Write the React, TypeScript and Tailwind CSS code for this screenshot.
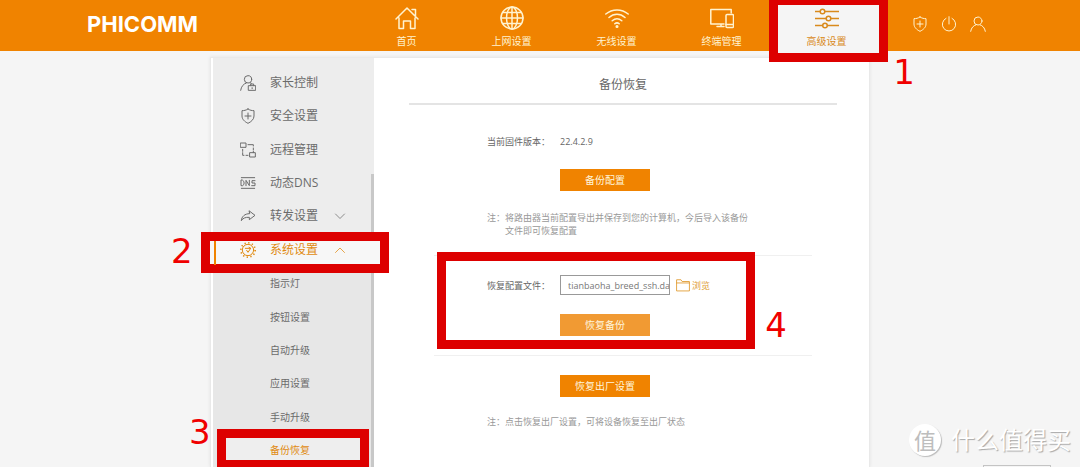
import type { ReactNode } from 'react';

type IconProps = { children: ReactNode; className?: string; box?: string };

function Icon({ children, className = 'size-4', box = '0 0 24 24' }: IconProps) {
  return (
    <svg
      viewBox={box}
      className={`shrink-0 ${className}`}
      fill="none"
      stroke="currentColor"
      strokeWidth="1.5"
      strokeLinecap="round"
      strokeLinejoin="round"
      aria-hidden="true"
    >
      {children}
    </svg>
  );
}

const shield = <path d="M12 1.500c3 2 6 2.500 9 2.500v8c0 5-4 8.500-9 11-5-2.500-9-6-9-11V4c3 0 6-.5 9-2.500ZM12 7.500v9M7.500 12h9" />;

const navItems = [
  {
    label: '首页',
    icon: <path d="M1 13 12 2l11 11M17 3.500h3.500V9.500M4 12v10.500h4.500v-7.500h7v7.500H20V12" />,
  },
  {
    label: '上网设置',
    icon: (
      <>
        <circle cx="12" cy="12" r="11" />
        <ellipse cx="12" cy="12" rx="5.500" ry="11" />
        <path d="M12 1v22M1 12h22M3 6.500h18M3 17.500h18" />
      </>
    ),
  },
  {
    label: '无线设置',
    icon: (
      <>
        <path d="M.8 8c6.500-5.500 15.900-5.500 22.400 0M4 11.500c4.800-4.300 11.200-4.300 16 0M7.200 14.800c3-2.600 6.600-2.600 9.600 0M9.800 17.800c1.400-1.200 3-1.200 4.400 0" />
        <circle cx="12" cy="20.500" r=".8" fill="currentColor" />
      </>
    ),
  },
  {
    label: '终端管理',
    icon: (
      <>
        <path d="M14 18H.8V3.500h20.400V7M11 18v2.500M7 20.500h7" />
        <rect x="16" y="8.500" width="7.500" height="13" rx="1" />
        <path d="M16 18.500h7.500" />
      </>
    ),
  },
  {
    label: '高级设置',
    icon: (
      <>
        <path d="M0 5.500h5M10 5.500h14M0 12.500h11M16 12.500h8M0 19.500h7.500M12.500 19.500H24" />
        <circle cx="7.500" cy="5.500" r="2.300" />
        <circle cx="13.500" cy="12.500" r="2.300" />
        <circle cx="10" cy="19.500" r="2.300" />
      </>
    ),
  },
];

const menuItems = [
  {
    label: '家长控制',
    icon: (
      <>
        <circle cx="12" cy="6.500" r="5.500" />
        <path d="M1 23c1-6 4-9.500 8.500-11M15 11.500l2 1" />
        <rect x="13" y="16" width="10.500" height="7" />
        <path d="M16 16v-2.500h4.500V16M18.200 19v1.500" />
      </>
    ),
  },
  { label: '安全设置', icon: shield },
  {
    label: '远程管理',
    icon: (
      <>
        <rect x="1" y="1.500" width="8" height="6.500" />
        <rect x="15" y="16" width="8" height="6.500" />
        <path d="M12 4h8v2M20 9v3M20 14v2M4 11v3M4 16v4h2M9 20h3" />
      </>
    ),
  },
  {
    label: '动态DNS',
    icon: (
      <>
        <path d="M2 4h20M2 20h20M1.500 8v8h2.500l2-2v-4l-2-2ZM9 16V8l5 8V8M22.500 8.500h-4.500v3.500h4.500v4h-5" />
      </>
    ),
  },
  {
    label: '转发设置',
    chevron: 'down',
    icon: <path d="M14 4.500 22.500 11 14 17.500V14C8 13.500 4 15.500 2 19c.5-6 5-10.500 12-10.500Z" />,
  },
  {
    label: '系统设置',
    chevron: 'up',
    icon: (
      <>
        <circle cx="12" cy="12" r="8.500" />
        <circle cx="12" cy="12" r="10.800" strokeDasharray="2 3.650" strokeWidth="2.400" strokeLinecap="butt" />
        <path d="M8 9.500h8l-4 6-2-3M13.500 8l2.500 1.500" />
      </>
    ),
  },
];

const subItems = ['指示灯', '按钮设置', '自动升级', '应用设置', '手动升级', '备份恢复'];

function Mark({ children, className }: { children: ReactNode; className: string }) {
  return (
    <span
      className={`pointer-events-none absolute z-30 font-['DejaVu_Sans',sans-serif] text-[34px] leading-9 font-normal text-[#f00000] ${className}`}
    >
      {children}
    </span>
  );
}

function ActionButton({ children, tone = 'bg-[#f08300]' }: { children: ReactNode; tone?: string }) {
  return (
    <button type="button" className={`h-[22px] w-[90px] text-[10px] leading-[22px] text-[#fff5dc] ${tone}`}>
      {children}
    </button>
  );
}

function Header() {
  return (
    <header className="relative z-20 h-[51px] bg-[#f08300] text-[#fff3d0]">
      <div className="mx-auto flex h-full max-w-[906px] items-start">
        <a href="#home" className="w-[267px] pt-3 font-[Inter,sans-serif] text-[22px] leading-6 font-bold text-white">
          PHICOMM
        </a>
        <nav className="grid h-full w-[525px] grid-cols-5">
          {navItems.map((item, i) => {
            const active = i === navItems.length - 1;
            return (
              <a
                key={item.label}
                href={`#nav-${i}`}
                className={`relative flex flex-col items-center pt-[6px] text-[10px] leading-[14px] ${
                  active ? 'text-[#d98a1c]' : ''
                }`}
              >
                {active && (
                  <>
                    <span className="absolute -top-1 -right-[9px] -bottom-[11px] -left-[5px] border-[9px] border-[#dd0000] bg-[#f5f5f5]" />
                    <Mark className="top-[54px] -right-9">1</Mark>
                  </>
                )}
                <Icon className="relative size-6">{item.icon}</Icon>
                <span className="relative mt-1">{item.label}</span>
              </a>
            );
          })}
        </nav>
        <div className="ml-[33px] flex gap-[13px] pt-4">
          <button type="button" aria-label="安全">
            <Icon>{shield}</Icon>
          </button>
          <button type="button" aria-label="退出">
            <Icon>
              <path d="M12 1v11M7.500 3.500a10 10 0 1 0 9 0" />
            </Icon>
          </button>
          <button type="button" aria-label="用户">
            <Icon>
              <circle cx="12" cy="7.500" r="6" />
              <path d="M1 23c1-5.500 4-8.500 8-9.800M23 23c-1-5.500-4-8.500-8-9.800" />
            </Icon>
          </button>
        </div>
      </div>
    </header>
  );
}

function Sidebar() {
  return (
    <aside className="relative flex w-[161px] shrink-0 flex-col bg-[#ededed] pt-2 text-[#6b6b6b]">
      <ul className="flex flex-1 flex-col text-[12px] leading-4">
        {menuItems.map((item, i) => {
          const active = item.chevron === 'up';
          return (
            <li key={item.label} className={`relative flex min-h-[33px] flex-1 ${active ? 'z-10' : ''}`}>
              {active && (
                <>
                  <span className="absolute -top-px -right-[15px] -left-3 h-[41px] border-[9px] border-[#dd0000] bg-[#f7f7f7]" />
                  <span className="absolute top-2 bottom-[2px] left-px w-[2px] bg-[#f08300]" />
                  <Mark className="top-0 -left-[42px]">2</Mark>
                </>
              )}
              <a
                href={`#menu-${i}`}
                className={`relative flex flex-1 items-center pl-[27px] ${active ? 'text-[#e08a10]' : ''}`}
              >
                <Icon className="size-4">{item.icon}</Icon>
                <span className="ml-[14px] w-16">{item.label}</span>
                {item.chevron && (
                  <Icon className="size-3">
                    <path d={active ? 'M3 17l9-9 9 9' : 'M3 8l9 9 9-9'} />
                  </Icon>
                )}
              </a>
            </li>
          );
        })}
      </ul>
      <ul className="flex flex-1 flex-col bg-[#e7e7e7] text-[10px] leading-4">
        {subItems.map((label, i) => {
          const active = i === subItems.length - 1;
          return (
            <li key={label} className="relative flex min-h-[33px] flex-1">
              {active && (
                <>
                  <span className="absolute -top-[5px] right-[5px] left-1 h-10 border-[9px] border-[#dd0000] bg-[#eeeeee]" />
                  <Mark className="-top-5 -left-6">3</Mark>
                </>
              )}
              <a
                href={`#sub-${i}`}
                className={`relative flex flex-1 items-center pl-[57px] ${active ? 'text-[#e08a10]' : ''}`}
              >
                {label}
              </a>
            </li>
          );
        })}
      </ul>
      <span className="absolute top-[116px] right-0 bottom-0 w-[3px] bg-[#c8c8c8]" />
    </aside>
  );
}

function Content() {
  return (
    <main className="min-w-0 flex-1 bg-white pr-8 pl-[35px] text-[9px] leading-[13px] text-[#666666]">
      <h1 className="border-b-2 border-[#e4e4e4] pt-[19px] pb-[10px] text-center text-[12px] leading-4">备份恢复</h1>
      <div className="mx-[25px]">
        <section className="border-b border-[#f0f0f0] pt-[30px] pb-[18px] pl-[53px]">
          <dl className="flex">
            <dt className="w-[73px]">当前固件版本：</dt>
            <dd>22.4.2.9</dd>
          </dl>
          <div className="mt-[21px] ml-[73px] flex">
            <ActionButton>备份配置</ActionButton>
          </div>
          <p className="mt-5 pl-[18px] -indent-[18px] whitespace-nowrap text-[#999999]">
            注：将路由器当前配置导出并保存到您的计算机，今后导入该备份
            <br />
            <span className="inline-block pl-[18px]">文件即可恢复配置</span>
          </p>
        </section>
        <section className="relative border-b border-[#f0f0f0] pt-[19px] pb-[19px] pl-[53px]">
          <span className="pointer-events-none absolute -top-1 right-[57px] left-[3px] h-[97px] border-[9px] border-[#dd0000]" />
          <Mark className="top-[51px] right-[25px]">4</Mark>
          <div className="flex items-center">
            <label htmlFor="config-file" className="w-[73px]">
              恢复配置文件：
            </label>
            <input
              id="config-file"
              type="text"
              defaultValue="tianbaoha_breed_ssh.dat"
              className="h-5 w-[110px] border border-[#999999] bg-white pl-[7px] text-[9px] leading-4 text-[#777777] outline-none"
            />
            <button type="button" className="ml-[6px] flex items-center gap-[2px] text-[#e09a30]">
              <Icon className="size-[14px]">
                <path d="M1 21.500V3h7.500l2 3H23v15.500ZM1 8.500h22" />
              </Icon>
              浏览
            </button>
          </div>
          <div className="mt-[19px] ml-[73px] flex">
            <ActionButton tone="bg-[#f19a33]">恢复备份</ActionButton>
          </div>
        </section>
        <section className="pt-[19px] pl-[53px]">
          <div className="ml-[73px] flex">
            <ActionButton>恢复出厂设置</ActionButton>
          </div>
          <p className="mt-[18px] text-[#999999]">注：点击恢复出厂设置，可将设备恢复至出厂状态</p>
        </section>
      </div>
    </main>
  );
}

function Watermark() {
  return (
    <div className="absolute right-[9px] bottom-[11px] flex items-center gap-[10px] text-white">
      <span className="flex size-8 items-center justify-center rounded-full bg-white text-[22px] leading-8 text-[#bdbdbd] shadow-[1px_1px_1px_#bbbbbb]">
        值
      </span>
      <span className="text-[24px] leading-8 [text-shadow:1px_1px_1px_#a8a8a8]">什么值得买</span>
    </div>
  );
}

export default function App() {
  return (
    <div className="relative flex min-h-screen flex-col overflow-hidden bg-[#f5f5f5] font-['Open_Sans','Noto_Sans_CJK_SC',sans-serif]">
      <Header />
      <div className="mx-auto mt-[6px] flex w-full max-w-[660px] flex-1 border-x border-t border-[#e9e9e9] bg-white pl-[2px] shadow-[0_0_3px_#e2e2e2]">
        <Sidebar />
        <Content />
      </div>
      <Watermark />
      <span className="absolute right-[29px] bottom-0 h-[2px] w-[68px] border-x border-t border-[#c4c4c4]" />
    </div>
  );
}
